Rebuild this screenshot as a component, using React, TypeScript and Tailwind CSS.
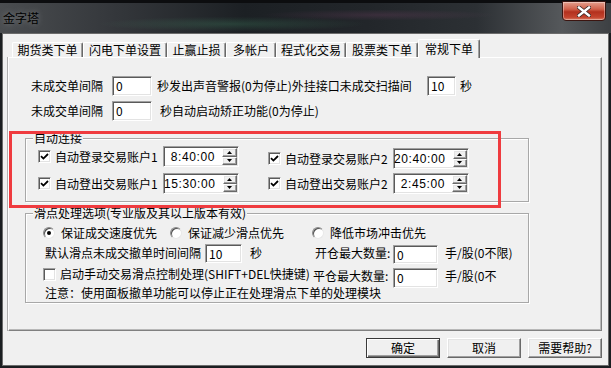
import type { ReactNode } from "react";

const SUNKEN =
    "bg-white border border-t-[#a0a0a0] border-l-[#a0a0a0] border-r-white border-b-white shadow-[inset_1px_1px_0_#5a5a5a,inset_-1px_-1px_0_#e3e3e3]";
const RAISED =
    "border border-t-white border-l-white border-r-[#696969] border-b-[#696969] shadow-[inset_-1px_-1px_0_#a0a0a0,inset_1px_1px_0_#e3e3e3]";

function NumBox({ value, className }: { value: string; className: string }) {
    return <div className={`${SUNKEN} ${className} shrink-0 pl-[3px] pt-[2px] text-[12px] leading-[14px]`}>{value}</div>;
}

function CheckBox({ checked }: { checked?: boolean }) {
    return (
        <div className={`${SUNKEN} flex h-[13px] w-[13px] shrink-0 items-center justify-center`}>
            {checked ? (
                <svg width="9" height="9" viewBox="0 0 9 9">
                    <path d="M1 4.2 L3.4 6.6 L8 2" fill="none" stroke="#000" strokeWidth="1.8" />
                </svg>
            ) : null}
        </div>
    );
}

function Radio({ checked }: { checked?: boolean }) {
    return (
        <div className="flex h-[12px] w-[12px] shrink-0 items-center justify-center rounded-full border border-t-[#8a8a8a] border-l-[#8a8a8a] border-r-[#e8e8e8] border-b-[#e8e8e8] bg-white shadow-[inset_1px_1px_0_#505050]">
            {checked ? <div className="h-[4px] w-[4px] rounded-full bg-black" /> : null}
        </div>
    );
}

function SpinArrow({ up }: { up?: boolean }) {
    return (
        <div className={`${RAISED} flex h-[9px] items-center justify-center bg-[#f0f0f0]`}>
            <svg width="5" height="3" viewBox="0 0 5 3">
                <path d={up ? "M2.5 0 L5 3 L0 3 Z" : "M0 0 L5 0 L2.5 3 Z"} fill="#000" />
            </svg>
        </div>
    );
}

function TimeSpin({ value }: { value: string }) {
    return (
        <div className={`${SUNKEN} flex h-[21px] w-[76px] shrink-0 items-stretch`}>
            <div className="flex flex-1 items-center justify-end pr-[7px] font-['Liberation_Sans',sans-serif] text-[12px] tracking-[0.6px]">
                {value}
            </div>
            <div className="flex w-[16px] flex-col justify-center py-[1px] pr-[1px]">
                <SpinArrow up />
                <SpinArrow />
            </div>
        </div>
    );
}

function GroupBox({ title, className, children }: { title: string; className: string; children: ReactNode }) {
    return (
        <div className={`relative border border-[#a8a8a8] shadow-[inset_1px_1px_0_#fff,1px_1px_0_#fff] ${className}`}>
            <span className="absolute left-[7px] top-[-8px] bg-[#f0f0f0] px-[1px] text-[12px] leading-[14px]">{title}</span>
            {children}
        </div>
    );
}

function AccountRow({ label, time, checked }: { label: string; time: string; checked?: boolean }) {
    return (
        <div className="flex h-[21px] items-center">
            <CheckBox checked={checked} />
            <span className="ml-[4px] w-[108px] shrink-0 whitespace-nowrap text-[12px] leading-[14px]">{label}</span>
            <TimeSpin value={time} />
        </div>
    );
}

const tabs = [
    { label: "期货类下单", w: "w-[71px]" },
    { label: "闪电下单设置", w: "w-[84px]" },
    { label: "止赢止损", w: "w-[59px]" },
    { label: "多帐户", w: "w-[50px]" },
    { label: "程式化交易", w: "w-[70px]" },
    { label: "股票类下单", w: "w-[72px]" },
];

function DialogButton({ label, isDefault }: { label: string; isDefault?: boolean }) {
    return (
        <div
            className={`flex h-[20px] w-[74px] items-center justify-center bg-[#f0f0f0] text-[12px] leading-[14px] ${
                isDefault
                    ? "border border-[#3a3a3a] shadow-[inset_1px_1px_0_#fff,inset_-1px_-1px_0_#696969,inset_-2px_-2px_0_#a0a0a0]"
                    : RAISED
            }`}
        >
            {label}
        </div>
    );
}

export default function App() {
    return (
        <div className="flex h-[368px] w-[611px] flex-col overflow-hidden bg-[#1b1e21] font-['Noto_Sans_CJK_SC',sans-serif] text-black">
            {/* title bar */}
            <div className="flex h-[33px] shrink-0 items-start justify-between border-t-[3px] border-[#0c0d0f] bg-[radial-gradient(ellipse_at_38%_70%,rgba(90,200,140,0.18),transparent_25%),radial-gradient(ellipse_at_62%_40%,rgba(200,90,160,0.14),transparent_22%),linear-gradient(90deg,#4a4d50,#35383c_18%,#1c2024_40%,#22262a_60%,#2c3034_78%,#55585b_92%,#3d4043)]">
                <span className="ml-[3px] mt-[7px] text-[12px] leading-[16px] text-black [text-shadow:0_0_6px_rgba(255,255,255,0.35)]">
                    金字塔
                </span>
                <div className="mr-[5px] mt-[-2px] flex h-[20px] w-[44px] items-center justify-center rounded-b-[4px] border border-[#3b1510] bg-[linear-gradient(180deg,#e4a08e,#d0604a_40%,#b3301e_55%,#c4442e_85%,#d9806a)] shadow-[inset_0_0_0_1px_rgba(255,255,255,0.35)]">
                    <svg width="14" height="11" viewBox="0 0 14 11">
                        <path d="M2 1.5 L12 9.5 M12 1.5 L2 9.5" stroke="#3a2a28" strokeWidth="4" strokeLinecap="square" />
                        <path d="M2 1.5 L12 9.5 M12 1.5 L2 9.5" stroke="#fff" strokeWidth="2.4" strokeLinecap="square" />
                    </svg>
                </div>
            </div>

            {/* client area */}
            <div className="mx-[2px] mb-[2px] flex flex-1 flex-col border border-[#6b6b6b] bg-[#f0f0f0] pl-[5px] pr-[6px] pt-[5px]">
                {/* tabs */}
                <div className="flex h-[18px] items-end pl-[4px]">
                    {tabs.map((tab) => (
                        <div
                            key={tab.label}
                            className={`${tab.w} flex h-[15px] items-center justify-center rounded-t-[2px] border-l border-t border-r border-l-white border-t-white border-r-[#696969] text-[12px] leading-[14px] shadow-[inset_-1px_0_0_#a0a0a0]`}
                        >
                            {tab.label}
                        </div>
                    ))}
                    <div className="relative z-10 mb-[-1px] flex h-[19px] w-[62px] items-start justify-center rounded-t-[2px] border-l border-t border-r border-l-white border-t-white border-r-[#696969] bg-[#f0f0f0] pt-[2px] text-[12px] leading-[14px] shadow-[inset_-1px_0_0_#a0a0a0]">
                        常规下单
                    </div>
                </div>

                {/* panel */}
                <div className="relative h-[274px] border border-t-white border-l-white border-r-[#808080] border-b-[#808080] pl-[16px] pt-[18px] shadow-[inset_-1px_-1px_0_#b8b8b8,-1px_0_0_#b0b0b0]">
                    <div className="flex h-[20px] items-center text-[12px] leading-[14px]">
                        <span className="ml-[6px] w-[81px] shrink-0">未成交单间隔</span>
                        <NumBox value="0" className="h-[20px] w-[40px]" />
                        <span className="ml-[5px] w-[270px] shrink-0 whitespace-nowrap">秒发出声音警报(0为停止)外挂接口未成交扫描间</span>
                        <NumBox value="10" className="h-[20px] w-[29px]" />
                        <span className="ml-[4px]">秒</span>
                    </div>
                    <div className="mt-[5px] flex h-[20px] items-center text-[12px] leading-[14px]">
                        <span className="ml-[6px] w-[81px] shrink-0">未成交单间隔</span>
                        <NumBox value="0" className="h-[20px] w-[40px]" />
                        <span className="ml-[8px] whitespace-nowrap">秒自动启动矫正功能(0为停止)</span>
                    </div>

                    <GroupBox title="自动连接" className="mt-[17px] h-[64px] w-[504px] pl-[12px] pt-[7px]">
                        <div className="flex">
                            <div className="flex flex-col gap-[6px]">
                                <AccountRow label="自动登录交易账户1" time="8:40:00" checked />
                                <AccountRow label="自动登出交易账户1" time="15:30:00" checked />
                            </div>
                            <div className="ml-[29px] mt-[2px] flex flex-col gap-[4px]">
                                <AccountRow label="自动登录交易账户2" time="20:40:00" checked />
                                <AccountRow label="自动登出交易账户2" time="2:45:00" checked />
                            </div>
                        </div>
                    </GroupBox>

                    <GroupBox title="滑点处理选项(专业版及其以上版本有效)" className="mt-[11px] h-[90px] w-[504px] pl-[17px] pt-[12px] text-[12px] leading-[14px]">
                        <div className="flex h-[14px] items-center">
                            <div className="flex w-[127px] shrink-0 items-center">
                                <Radio checked />
                                <span className="ml-[6px]">保证成交速度优先</span>
                            </div>
                            <div className="flex w-[142px] shrink-0 items-center">
                                <Radio />
                                <span className="ml-[6px]">保证减少滑点优先</span>
                            </div>
                            <div className="flex items-center">
                                <Radio />
                                <span className="ml-[6px]">降低市场冲击优先</span>
                            </div>
                        </div>
                        <div className="mt-[3px] flex h-[20px] items-center">
                            <span className="ml-[2px] w-[160px] shrink-0 whitespace-nowrap">默认滑点未成交撤单时间间隔</span>
                            <NumBox value="10" className="h-[19px] w-[37px]" />
                            <span className="w-[73px] shrink-0 pl-[8px]">秒</span>
                            <span className="w-[78px] shrink-0 whitespace-nowrap">开仓最大数量:</span>
                            <NumBox value="0" className="mt-[2px] h-[19px] w-[45px]" />
                            <span className="ml-[7px] whitespace-nowrap">手/股(0不限)</span>
                        </div>
                        <div className="mt-[4px] flex h-[20px] items-start">
                            <div className="flex w-[270px] shrink-0 items-center">
                                <CheckBox />
                                <span className="ml-[4px] whitespace-nowrap">启动手动交易滑点控制处理(SHIFT+DEL快捷键)</span>
                            </div>
                            <span className="mt-[2px] w-[80px] shrink-0 whitespace-nowrap">平仓最大数量:</span>
                            <NumBox value="0" className="mt-[1px] h-[20px] w-[45px]" />
                            <span className="ml-[7px] mt-[2px] whitespace-nowrap">手/股(0不</span>
                        </div>
                        <div className="ml-[2px] whitespace-nowrap leading-[12px]">注意：使用面板撤单功能可以停止正在处理滑点下单的处理模块</div>
                    </GroupBox>

                    {/* highlight annotation */}
                    <div className="pointer-events-none absolute left-[0px] top-[73px] h-[77px] w-[492px] border-[3px] border-[#ef3b3f]" />
                </div>

                {/* buttons */}
                <div className="mt-[7px] flex justify-end gap-[7px]">
                    <DialogButton label="确定" isDefault />
                    <DialogButton label="取消" />
                    <DialogButton label="需要帮助?" />
                </div>
            </div>
        </div>
    );
}
